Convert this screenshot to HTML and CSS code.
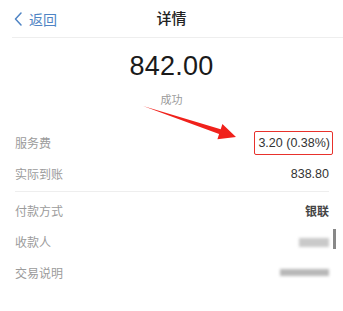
FILE: index.html
```html
<!DOCTYPE html>
<html lang="zh-CN">
<head>
  <meta charset="UTF-8" />
  <meta name="viewport" content="width=device-width,initial-scale=1.0"/>
  <title>详情</title>
  <link rel="stylesheet" href="styles.css">
</head>
<body>
  <!-- Top bar -->
  <div class="nav">
    <a class="back" href="#">
      <svg class="back-icon" width="8" height="14" viewBox="0 0 8 14">
        <path d="M7 1 L1.5 7 L7 13" fill="none" stroke="currentColor" stroke-width="1.5" stroke-linecap="round" stroke-linejoin="round"/>
      </svg>
      <span>返回</span>
    </a>
    <div class="nav-title">详情</div>
  </div>

  <!-- Amount -->
  <div class="summary">
    <div class="amount">842.00</div>
    <div class="status">成功</div>
  </div>

  <!-- Details -->
  <div class="details">
    <svg class="arrow" width="343" height="60" viewBox="0 100 343 60">
      <polygon points="143,107 220.7,130.2 222.4,125 236,138 217.4,140.2 219.1,135" fill="#f0211b"/>
    </svg>

    <div class="row">
      <span class="label">服务费</span>
      <span class="value boxed">3.20 (0.38%)</span>
    </div>
    <div class="row">
      <span class="label">实际到账</span>
      <span class="value">838.80</span>
    </div>

    <hr class="divider" />

    <div class="row">
      <span class="label">付款方式</span>
      <span class="value strong">银联</span>
    </div>
    <div class="row">
      <span class="label">收款人</span>
      <span class="value">
        <span class="blur blur-name"></span>
        <span class="edge-bar"></span>
      </span>
    </div>
    <div class="row">
      <span class="label">交易说明</span>
      <span class="value">
        <span class="blur blur-note"></span>
      </span>
    </div>
  </div>
</body>
</html>
```

FILE: styles.css
```css
/* ---------- Global ---------- */
* {
  box-sizing: border-box;
}
body {
  margin: 0;
  background: #fff;
  color: #222;
  font-family: "Liberation Sans", "Noto Sans CJK SC", sans-serif;
  width: 343px;
  overflow: hidden;
}

/* ---------- Top bar ---------- */
.nav {
  position: relative;
  height: 38px;
  margin-left: 12px;
  border-bottom: 1px solid #eeeeee;
  display: flex;
  align-items: center;
  justify-content: center;
}
.back {
  position: absolute;
  left: 2px;
  top: 9px;
  display: flex;
  align-items: center;
  gap: 7px;
  color: #4f84c4;
  text-decoration: none;
  font-size: 14px;
}
.back-icon {
  display: block;
}
.nav-title {
  margin-left: -12px;
  margin-top: -3px;
  font-size: 15px;
  font-weight: 500;
  color: #222;
}

/* ---------- Amount ---------- */
.summary {
  display: flex;
  flex-direction: column;
  align-items: center;
  padding-top: 13px;
}
.amount {
  font-size: 27px;
  line-height: 30px;
  color: #1a1a1a;
  letter-spacing: 0.2px;
}
.status {
  margin-top: 12px;
  font-size: 11px;
  line-height: 14px;
  color: #9a9a9a;
}

/* ---------- Details ---------- */
.details {
  position: relative;
  padding: 20px 14px 0 15px;
}
.arrow {
  position: absolute;
  left: 0;
  top: -8px;
}
.row {
  height: 31px;
  display: flex;
  align-items: center;
  justify-content: space-between;
}
.label {
  font-size: 12px;
  color: #9b9b9b;
}
.value {
  display: flex;
  align-items: center;
  font-size: 12.5px;
  color: #333;
}
.value.strong {
  font-size: 12px;
  font-weight: 700;
  color: #444;
}
.boxed {
  padding: 4px 2px 4px 3px;
  margin-right: -4px;
  border: 1.5px solid #e8312c;
  border-radius: 2px;
}
.divider {
  margin: 2px 0 3px;
  border: 0;
  border-top: 1px solid #eeeeee;
}

/* ---------- Hidden info ---------- */
.blur {
  display: block;
  background: #c9c9c9;
  filter: blur(1.5px);
}
.blur-name {
  width: 30px;
  height: 9px;
  margin-top: 2px;
}
.blur-note {
  width: 49px;
  height: 7px;
  background: #b8b8b8;
}
.edge-bar {
  display: block;
  width: 3px;
  height: 20px;
  margin: -6px -7px 0 4px;
  background: #888;
  filter: blur(0.5px);
}
```
